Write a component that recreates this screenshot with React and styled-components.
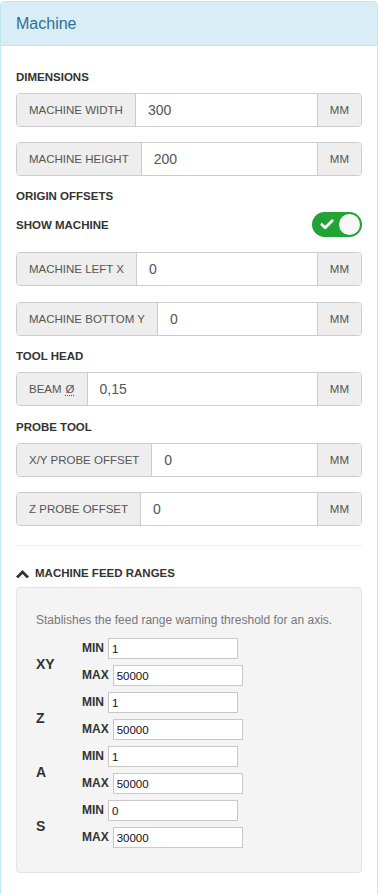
import React from "react";
import styled, { createGlobalStyle } from "styled-components";

const Global = createGlobalStyle`
  html, body { margin: 0; padding: 0; background: #fff; }
  body {
    font-family: "Liberation Sans", Arial, Helvetica, sans-serif;
    font-size: 14px;
    line-height: 1.42857;
    color: #333;
  }
  * { box-sizing: border-box; }
`;

const Panel = styled.div`
  width: 378px;
  margin-top: 1px;
  border: 1px solid #bce8f1;
  border-radius: 4px;
  background: #fff;
  min-height: 920px;
`;

const Heading = styled.div`
  background: #d9edf7;
  border-bottom: 1px solid #bce8f1;
  border-radius: 3px 3px 0 0;
  padding: 10px 15px;
  height: 44px;
`;

const Title = styled.h3`
  margin: 0;
  font-size: 16px;
  font-weight: normal;
  line-height: 23px;
  color: #31708f;
`;

const Body = styled.div`
  padding: 15px;
  display: flex;
  flex-direction: column;
`;

const SectionLabel = styled.div`
  margin-top: ${(p) => p.$mt}px;
  margin-bottom: 6px;
  font-size: 11.5px;
  font-weight: bold;
  line-height: 20px;
  color: #333;
  text-transform: uppercase;
`;

const ToggleRow = styled.div`
  display: flex;
  align-items: center;
  justify-content: space-between;
  height: 25px;
  margin-bottom: 15px;
`;

const Switch = styled.div`
  width: 50px;
  height: 25px;
  border-radius: 13px;
  background: #21a336;
  display: flex;
  align-items: center;
  justify-content: space-between;
  padding: 0 2px 0 8px;
`;

const Knob = styled.div`
  width: 21px;
  height: 21px;
  border-radius: 50%;
  background: #f8f8f8;
`;

const InputGroup = styled.div`
  display: flex;
  height: 34px;
  margin-bottom: ${(p) => p.$mb}px;
  border: 1px solid #ccc;
  border-radius: 4px;
  overflow: hidden;
`;

const Addon = styled.div`
  flex: none;
  display: flex;
  align-items: center;
  padding: 0 12px;
  background: #eee;
  color: #555;
  font-size: 11.5px;
  text-transform: uppercase;
  white-space: nowrap;
  border-${(p) => (p.$side === "left" ? "right" : "left")}: 1px solid #ccc;
`;

const Abbr = styled.abbr`
  margin-left: 4px;
  text-decoration: underline dotted;
  text-underline-offset: 2px;
`;

const Field = styled.input`
  flex: 1;
  min-width: 0;
  border: 0;
  padding: 0 12px;
  font-family: inherit;
  font-size: 14px;
  color: #555;
  background: #fff;
  outline: none;
`;

const Rule = styled.hr`
  margin: 4px 0 20px;
  border: 0;
  border-top: 1px solid #eee;
  width: 100%;
`;

const CollapseHeader = styled.div`
  display: flex;
  align-items: center;
  gap: 6px;
  font-size: 11.5px;
  font-weight: bold;
  line-height: 15px;
  color: #333;
  margin-bottom: 6px;
`;

const Well = styled.div`
  background: #f4f4f4;
  border: 1px solid #e3e3e3;
  border-radius: 4px;
  padding: 22px 19px 21px;
`;

const Help = styled.p`
  margin: 0 0 5px;
  font-size: 12px;
  line-height: 20px;
  color: #777;
`;

const AxisBlock = styled.div`
  display: grid;
  grid-template-columns: 46px auto;
  grid-auto-rows: 27px;
  align-items: center;
`;

const AxisName = styled.div`
  grid-row: span 2;
  align-self: center;
  padding-top: 5px;
  font-size: 14px;
  font-weight: bold;
  color: #333;
`;

const RangeRow = styled.label`
  display: flex;
  align-items: center;
  gap: 4px;
  font-size: 12px;
  font-weight: bold;
  color: #333;
`;

const RangeInput = styled.input`
  width: 130px;
  height: 21px;
  border: 1px solid #c8c8c8;
  border-radius: 0;
  padding: 0 3px;
  font-family: inherit;
  font-size: 11.5px;
  color: #111;
  background: #fff;
  outline: none;
`;

const Row = ({ label, value, mb, children }) => (
  <InputGroup $mb={mb}>
    <Addon $side="left">
      {label}
      {children}
    </Addon>
    <Field defaultValue={value} />
    <Addon $side="right">mm</Addon>
  </InputGroup>
);

const axes = [
  { name: "XY", min: "1", max: "50000" },
  { name: "Z", min: "1", max: "50000" },
  { name: "A", min: "1", max: "50000" },
  { name: "S", min: "0", max: "30000" },
];

export default function App() {
  return (
    <>
      <Global />
      <Panel>
        <Heading>
          <Title>Machine</Title>
        </Heading>
        <Body>
          <SectionLabel $mt={6}>Dimensions</SectionLabel>
          <Row label="Machine width" value="300" mb={15} />
          <Row label="Machine height" value="200" mb={10} />
          <SectionLabel $mt={0}>Origin offsets</SectionLabel>
          <ToggleRow>
            <SectionLabel as="span" $mt={0} style={{ marginBottom: 0 }}>
              Show machine
            </SectionLabel>
            <Switch>
              <svg width="14" height="11" viewBox="0 0 14 11">
                <path
                  d="M1.8 5.6 L5.2 8.8 L12.2 1.8"
                  fill="none"
                  stroke="#fff"
                  strokeWidth="2.8"
                  strokeLinecap="round"
                  strokeLinejoin="round"
                />
              </svg>
              <Knob />
            </Switch>
          </ToggleRow>
          <Row label="Machine left X" value="0" mb={16} />
          <Row label="Machine bottom Y" value="0" mb={10} />
          <SectionLabel $mt={0}>Tool head</SectionLabel>
          <Row label="Beam" value="0,15" mb={11}>
            <Abbr title="diameter">Ø</Abbr>
          </Row>
          <SectionLabel $mt={0}>Probe tool</SectionLabel>
          <Row label="X/Y probe offset" value="0" mb={15} />
          <Row label="Z probe offset" value="0" mb={15} />
          <Rule />
          <CollapseHeader>
            <svg width="13" height="9" viewBox="0 0 13 9">
              <path
                d="M2 7.5 L6.5 3 L11 7.5"
                fill="none"
                stroke="#333"
                strokeWidth="2.8"
                strokeLinecap="square"
              />
            </svg>
            MACHINE FEED RANGES
          </CollapseHeader>
          <Well>
            <Help>Stablishes the feed range warning threshold for an axis.</Help>
            {axes.map((a) => (
              <AxisBlock key={a.name}>
                <AxisName>{a.name}</AxisName>
                <RangeRow>
                  MIN <RangeInput defaultValue={a.min} />
                </RangeRow>
                <RangeRow>
                  MAX <RangeInput defaultValue={a.max} />
                </RangeRow>
              </AxisBlock>
            ))}
          </Well>
        </Body>
      </Panel>
    </>
  );
}
